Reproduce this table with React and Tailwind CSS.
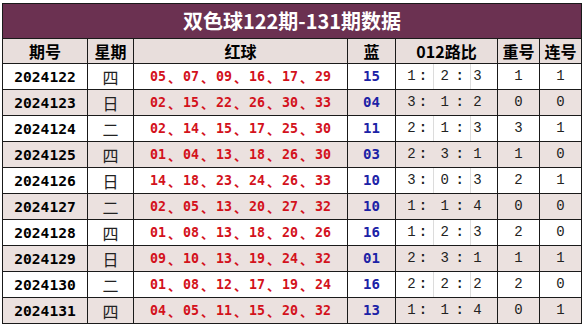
import React from "react";

const rows = [
  { id: "2024122", wk: "四", red: ["05", "07", "09", "16", "17", "29"], blue: "15", r: ["1", "2", "3"], cf: "1", lh: "1" },
  { id: "2024123", wk: "日", red: ["02", "15", "22", "26", "30", "33"], blue: "04", r: ["3", "1", "2"], cf: "0", lh: "0" },
  { id: "2024124", wk: "二", red: ["02", "14", "15", "17", "25", "30"], blue: "11", r: ["2", "1", "3"], cf: "3", lh: "1" },
  { id: "2024125", wk: "四", red: ["01", "04", "13", "18", "26", "30"], blue: "03", r: ["2", "3", "1"], cf: "1", lh: "0" },
  { id: "2024126", wk: "日", red: ["14", "18", "23", "24", "26", "33"], blue: "10", r: ["3", "0", "3"], cf: "2", lh: "1" },
  { id: "2024127", wk: "二", red: ["02", "05", "13", "20", "27", "32"], blue: "10", r: ["1", "1", "4"], cf: "0", lh: "0" },
  { id: "2024128", wk: "四", red: ["01", "08", "13", "18", "20", "26"], blue: "16", r: ["1", "2", "3"], cf: "2", lh: "0" },
  { id: "2024129", wk: "日", red: ["09", "10", "13", "19", "24", "32"], blue: "01", r: ["2", "3", "1"], cf: "1", lh: "1" },
  { id: "2024130", wk: "二", red: ["01", "08", "12", "17", "19", "24"], blue: "16", r: ["2", "2", "2"], cf: "2", lh: "0" },
  { id: "2024131", wk: "四", red: ["04", "05", "11", "15", "20", "32"], blue: "13", r: ["1", "1", "4"], cf: "0", lh: "1" },
];

const cols = "grid grid-cols-[85px_46px_214px_48px_102px_42px_42px]";
const cell = "flex items-center justify-center border-r border-b border-[#1a1a1a]";
const cjk = "font-['Noto_Sans_CJK_SC',sans-serif]";
const mono = "font-['DejaVu_Sans_Mono','Noto_Sans_CJK_SC',monospace]";
const thin = "font-['Liberation_Mono',monospace]";

// 012 ratio cell: three spreadsheet sub-cells with faint gridlines between
function Ratio({ r, shaded }) {
  const line = shaded ? "border-transparent" : "border-[#dcdcdc]";
  return (
    <div className={`flex h-full w-full text-[14px] text-[#222] ${thin}`}>
      <div className={`flex items-center w-[38px] h-full pl-[10px] border-r ${line}`}>
        <span className="flex justify-center w-[11px]">{r[0]}</span>
        <span className="flex justify-center w-[12px] font-bold">:</span>
      </div>
      <div className={`flex items-center w-[37px] h-full pl-[6px] border-r ${line}`}>
        <span className="flex justify-center w-[11px]">{r[1]}</span>
        <span className="flex justify-center w-[24px] font-bold">:</span>
      </div>
      <div className="flex items-center flex-1 h-full pl-[1px]">
        <span className="flex justify-center w-[11px]">{r[2]}</span>
      </div>
    </div>
  );
}

export default function App() {
  return (
    <div className="w-[586px] h-[328px] bg-white pt-[3px] pl-[2px] overflow-hidden">
      <div className="w-[580px] border-l border-t border-[#1a1a1a]">
        <div className={`h-[35px] flex items-center justify-center bg-[#6b3151] border-r border-b border-[#1a1a1a] text-white text-[20px] font-bold ${cjk}`}>
          双色球122期-131期数据
        </div>
        <div className={`${cols} h-[25px] bg-[#e8dedc] text-[16px] font-bold text-black ${cjk}`}>
          <div className={cell}>期号</div>
          <div className={cell}>星期</div>
          <div className={cell}>红球</div>
          <div className={cell}>蓝</div>
          <div className={cell}>012路比</div>
          <div className={cell}>重号</div>
          <div className={cell}>连号</div>
        </div>
        {rows.map((row, i) => {
          const shaded = i % 2 === 1;
          return (
            <div key={row.id} className={`${cols} h-[26px] ${shaded ? "bg-[#ebe1df]" : "bg-white"}`}>
              <div className={`${cell} text-[14.6px] font-bold text-black ${mono}`}>{row.id}</div>
              <div className={`${cell} text-[16px] text-[#222] ${cjk}`}>{row.wk}</div>
              <div className={`${cell} text-[#d3121c] font-bold`}>
                {row.red.map((n, j) => (
                  <React.Fragment key={j}>
                    {j > 0 && <span className={`w-[17px] text-center text-[13px] ${cjk}`}>、</span>}
                    <span className={`w-[16px] text-center text-[13.3px] ${mono}`}>{n}</span>
                  </React.Fragment>
                ))}
              </div>
              <div className={`${cell} text-[14px] font-bold text-[#1c22a6] ${mono}`}>{row.blue}</div>
              <div className={`${cell} justify-start`}>
                <Ratio r={row.r} shaded={shaded} />
              </div>
              <div className={`${cell} text-[14px] text-[#222] ${thin}`}>{row.cf}</div>
              <div className={`${cell} text-[14px] text-[#222] ${thin}`}>{row.lh}</div>
            </div>
          );
        })}
      </div>
    </div>
  );
}
